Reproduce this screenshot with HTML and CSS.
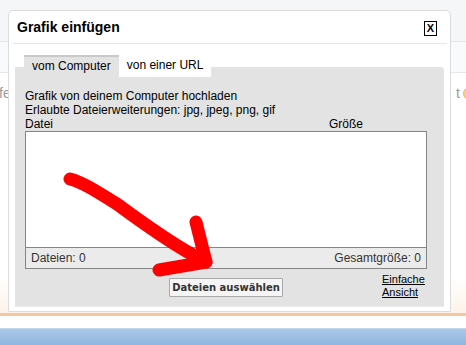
FILE: index.html
```html
<!DOCTYPE html>
<html lang="de">
<head>
    <meta charset="UTF-8">
    <title>Grafik einfügen</title>
    <link rel="stylesheet" href="styles.css">
</head>
<body>
    <div class="page">
        <div class="topbar"></div>
        <div class="subbar"></div>
        <div class="content">
            <span class="stub-left">fe</span>
            <span class="stub-right">t <i class="smiley"></i></span>
        </div>
        <div class="footer-line"></div>
        <div class="bluebar"></div>
    </div>

    <div class="dialog">
        <div class="dlg-head">
            <h1 class="dlg-title">Grafik einfügen</h1>
            <span class="dlg-close">X</span>
        </div>
        <div class="dlg-body">
            <div class="tabs">
                <span class="tab active">vom Computer</span>
                <span class="tab">von einer URL</span>
            </div>
            <div class="panel">
                <p class="info">Grafik von deinem Computer hochladen</p>
                <p class="info">Erlaubte Dateierweiterungen: jpg, jpeg, png, gif</p>
                <div class="cols">
                    <span class="col-name">Datei</span>
                    <span class="col-size">Größe</span>
                </div>
                <div class="filebox">
                    <div class="filelist"></div>
                    <div class="filefoot">
                        <span>Dateien: 0</span>
                        <span>Gesamtgröße: 0</span>
                    </div>
                </div>
                <div class="actions">
                    <span></span>
                    <button class="btn">Dateien auswählen</button>
                    <a href="#" class="simple-link">Einfache<br>Ansicht</a>
                </div>
            </div>
        </div>
    </div>

    <!-- roter Pfeil (Markierung) -->
    <svg class="marker" width="466" height="345" viewBox="0 0 466 345">
        <g fill="none" stroke="#ff0000" stroke-width="13" stroke-linecap="round" stroke-linejoin="round">
            <path d="M70 179 C 82 182, 96 191, 117 204 C 140 221, 168 241, 193 255 L 206 262"/>
            <path d="M196 222 L 206 262 L 159 270"/>
        </g>
    </svg>
</body>
</html>
```

FILE: styles.css
```css
* {
    margin: 0;
    padding: 0;
    box-sizing: border-box;
}

body {
    font-family: 'Liberation Sans', Arial, sans-serif;
    background: #ffffff;
    color: #000;
    width: 466px;
    height: 345px;
    overflow: hidden;
    position: relative;
}

/* Hintergrundseite */
.page {
    display: flex;
    flex-direction: column;
    height: 345px;
}

.topbar {
    height: 42px;
    background: #f5f6f8;
    border-bottom: 1px solid #e2e4e8;
}

.subbar {
    height: 31px;
    background: #f9fafb;
    border-bottom: 1px solid #e6e7ea;
}

.content {
    height: 240px;
    display: flex;
    justify-content: space-between;
    align-items: flex-start;
    padding-top: 12px;
    font-size: 14px;
    color: #9a9a9a;
    background: linear-gradient(to bottom, #ffffff 85%, #fdf3ea 100%);
}

.stub-left {
    margin-left: -1px;
}

.stub-right {
    display: flex;
    align-items: center;
    gap: 3px;
}

.smiley {
    display: inline-block;
    width: 13px;
    height: 13px;
    border-radius: 50%;
    background: #f6d77a;
    border: 1px solid #e8b950;
    margin-right: -10px;
}

.footer-line {
    height: 15px;
    border-top: 3px solid #f3c7a0;
    background: #ffffff;
}

.bluebar {
    flex: 1;
    background: linear-gradient(to bottom, #a9c8e8 0%, #8fb6de 100%);
    border-top: 1px solid #c3d8ee;
}

/* Dialog */
.dialog {
    position: absolute;
    left: 8px;
    top: 10px;
    width: 443px;
    height: 302px;
    background: #fff;
    border: 1px solid #dcdcdc;
    border-radius: 5px 5px 0 0;
}

.dlg-head {
    height: 33px;
    margin: 0 3px 0 4px;
    padding: 0 10px 0 4px;
    display: flex;
    align-items: center;
    justify-content: space-between;
    border-bottom: 1px solid #e6e6e6;
}

.dlg-title {
    font-size: 14px;
    font-weight: 700;
    margin-top: -1px;
}

.dlg-close {
    width: 13px;
    height: 15px;
    border: 1px solid #000;
    font-size: 11px;
    font-weight: 700;
    line-height: 13px;
    text-align: center;
    margin-top: 2px;
}

.dlg-body {
    padding: 11px 6px 0 6px;
}

.tabs {
    display: flex;
    margin-left: 9px;
    margin-bottom: -10px;
    position: relative;
}

.tab {
    height: 22px;
    padding: 0 8px;
    font-size: 12px;
    line-height: 21px;
    background: #fff;
}

.tab.active {
    background: #e3e3e3;
    border-top: 2px solid #c9c9c9;
    line-height: 19px;
}

.panel {
    height: 240px;
    background: #e3e3e3;
    border-radius: 0 4px 0 0;
    padding: 22px 17px 0 10px;
    border-bottom: 1px solid #ececec;
}

.info {
    font-size: 12px;
    line-height: 14px;
}

.cols {
    display: flex;
    font-size: 12px;
    line-height: 14px;
}

.col-name {
    flex: 1;
}

.col-size {
    width: 98px;
}

.filebox {
    border: 1px solid #858585;
    background: #fff;
}

.filelist {
    height: 115px;
}

.filefoot {
    height: 21px;
    border-top: 1px solid #858585;
    background: #ebebeb;
    display: flex;
    justify-content: space-between;
    align-items: center;
    padding: 0 5px;
    font-size: 12px;
    color: #333;
}

.actions {
    display: grid;
    grid-template-columns: 1fr auto 1fr;
    align-items: start;
    margin-top: 4px;
}

.btn {
    margin-top: 5px;
    height: 19px;
    padding: 0 2px;
    font-family: 'DejaVu Sans', Verdana, sans-serif;
    font-size: 10px;
    font-weight: 700;
    color: #333;
    background: #f5f5f5;
    border: 1px solid #a9a9a9;
    border-radius: 1px;
}

.simple-link {
    justify-self: end;
    margin-right: 2px;
    font-size: 11px;
    line-height: 13px;
    color: #000;
    text-decoration: underline;
    width: 43px;
}

.marker {
    position: absolute;
    left: 0;
    top: 0;
    pointer-events: none;
    filter: blur(0.6px);
}
```
